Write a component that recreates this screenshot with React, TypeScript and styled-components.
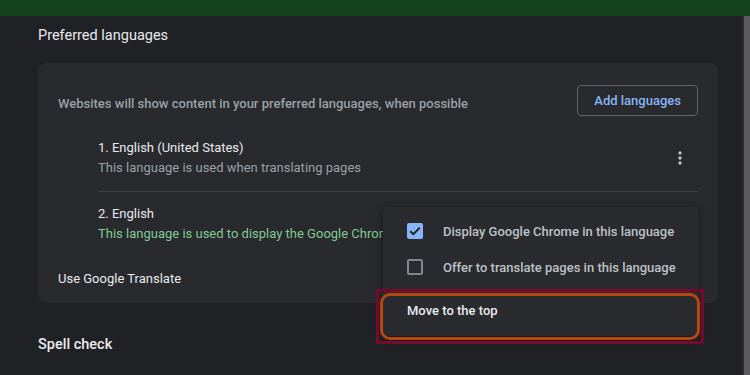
import React from 'react';
import styled, { createGlobalStyle } from 'styled-components';

const GlobalStyle = createGlobalStyle`
  html, body {
    margin: 0;
    padding: 0;
    background: #202124;
  }
  * {
    box-sizing: border-box;
  }
`;

const Page = styled.div`
  position: relative;
  width: 750px;
  height: 375px;
  overflow: hidden;
  display: flex;
  flex-direction: column;
  background: #202124;
  font-family: Roboto, 'Liberation Sans', sans-serif;
  color: #e8eaed;
`;

const TopBar = styled.div`
  height: 16px;
  flex-shrink: 0;
  background: #13421a;
`;

const Main = styled.div`
  flex: 1;
  display: flex;
  min-height: 0;
`;

const Content = styled.div`
  flex: 1;
  padding: 10px 24px 0 38px;
`;

const Scrollbar = styled.div`
  width: 8px;
  background: #2b2b2d;
  padding-left: 2px;
`;

const ScrollThumb = styled.div`
  height: 100%;
  background: #5c5c5e;
`;

const SectionTitle = styled.div<{ $gap?: number }>`
  font-size: 14.5px;
  line-height: 20px;
  font-weight: ${p => (p.$gap ? 500 : 400)};
  margin-top: ${p => p.$gap || 0}px;
  color: #e8eaed;
`;

const Card = styled.div`
  margin-top: 17px;
  background: #292a2d;
  border-radius: 8px;
  padding: 22px 20px 14px;
`;

const CardHeader = styled.div`
  display: flex;
  align-items: flex-end;
  justify-content: space-between;
  margin-bottom: 10px;
`;

const Muted = styled.div`
  font-size: 13px;
  line-height: 20px;
  font-weight: 500;
  color: #9aa0a6;
  padding-bottom: 2px;
`;

const OutlineButton = styled.button`
  height: 31px;
  padding: 0 16px;
  background: transparent;
  border: 1px solid #5f6368;
  border-radius: 4px;
  color: #8ab4f8;
  font-family: Roboto, 'Liberation Sans', sans-serif;
  font-size: 13px;
  font-weight: 500;
`;

const LangList = styled.div`
  padding-left: 40px;
`;

const LangRow = styled.div<{ $last?: boolean }>`
  display: flex;
  align-items: center;
  padding: 12px 0 13px;
  border-bottom: ${p => (p.$last ? 'none' : '1px solid #3f4043')};
`;

const LangText = styled.div`
  flex: 1;
`;

const LangName = styled.div`
  font-size: 13px;
  line-height: 20px;
  color: #e8eaed;
`;

const LangSub = styled.div<{ $active?: boolean }>`
  font-size: 13px;
  line-height: 20px;
  color: ${p => (p.$active ? '#81c995' : '#9aa0a6')};
  white-space: nowrap;
`;

const Kebab = styled.div`
  width: 36px;
  display: flex;
  justify-content: center;
`;

const TranslateRow = styled.div`
  margin-top: 12px;
  font-size: 13px;
  line-height: 20px;
  color: #e8eaed;
`;

const Menu = styled.div`
  position: absolute;
  left: 383px;
  top: 207px;
  width: 315px;
  padding: 6px 0 8px;
  background: #2a2b2e;
  border-radius: 4px;
  box-shadow: 0 2px 8px rgba(0, 0, 0, 0.45);
`;

const MenuItem = styled.div<{ $bold?: boolean }>`
  display: flex;
  align-items: center;
  gap: 20px;
  height: 36px;
  padding-left: 24px;
  margin-top: ${p => (p.$bold ? 7 : 0)}px;
  font-size: 13px;
  font-weight: 500;
  color: ${p => (p.$bold ? '#e8eaed' : '#bdc1c6')};
`;

const Check = styled.div<{ $on?: boolean }>`
  width: 16px;
  height: 16px;
  border-radius: 2px;
  display: flex;
  align-items: center;
  justify-content: center;
  background: ${p => (p.$on ? '#8ab4f8' : 'transparent')};
  border: ${p => (p.$on ? 'none' : '2px solid #80868b')};
`;

const Highlight = styled.div`
  position: absolute;
  left: 376px;
  top: 289px;
  width: 328px;
  height: 55px;
  border: 3px solid #740a2e;
  pointer-events: none;
`;

const HighlightRing = styled.div`
  position: absolute;
  inset: 1px;
  border: 3px solid #b6470f;
  border-radius: 10px;
`;

const KebabIcon = () => (
  <svg width="4" height="14" viewBox="0 0 4 14">
    <circle cx="2" cy="2" r="1.7" fill="#bdc1c6" />
    <circle cx="2" cy="7" r="1.7" fill="#bdc1c6" />
    <circle cx="2" cy="12" r="1.7" fill="#bdc1c6" />
  </svg>
);

const CheckMark = () => (
  <svg width="12" height="10" viewBox="0 0 12 10">
    <path d="M1.2 5.2 L4.4 8.2 L10.8 1.6" stroke="#202124" strokeWidth="2" fill="none" />
  </svg>
);

const languages = [
  { name: '1. English (United States)', sub: 'This language is used when translating pages', active: false },
  { name: '2. English', sub: 'This language is used to display the Google Chrome interface', active: true },
];

export default function App() {
  return (
    <Page>
      <GlobalStyle />
      <TopBar />
      <Main>
        <Content>
          <SectionTitle>Preferred languages</SectionTitle>
          <Card>
            <CardHeader>
              <Muted>Websites will show content in your preferred languages, when possible</Muted>
              <OutlineButton>Add languages</OutlineButton>
            </CardHeader>
            <LangList>
              {languages.map((l, i) => (
                <LangRow key={l.name} $last={i === languages.length - 1}>
                  <LangText>
                    <LangName>{l.name}</LangName>
                    <LangSub $active={l.active}>{l.sub}</LangSub>
                  </LangText>
                  <Kebab>
                    <KebabIcon />
                  </Kebab>
                </LangRow>
              ))}
            </LangList>
            <TranslateRow>Use Google Translate</TranslateRow>
          </Card>
          <SectionTitle $gap={32}>Spell check</SectionTitle>
        </Content>
        <Scrollbar>
          <ScrollThumb />
        </Scrollbar>
      </Main>
      <Menu>
        <MenuItem>
          <Check $on>
            <CheckMark />
          </Check>
          Display Google Chrome in this language
        </MenuItem>
        <MenuItem>
          <Check />
          Offer to translate pages in this language
        </MenuItem>
        <MenuItem $bold>Move to the top</MenuItem>
      </Menu>
      <Highlight>
        <HighlightRing />
      </Highlight>
    </Page>
  );
}
